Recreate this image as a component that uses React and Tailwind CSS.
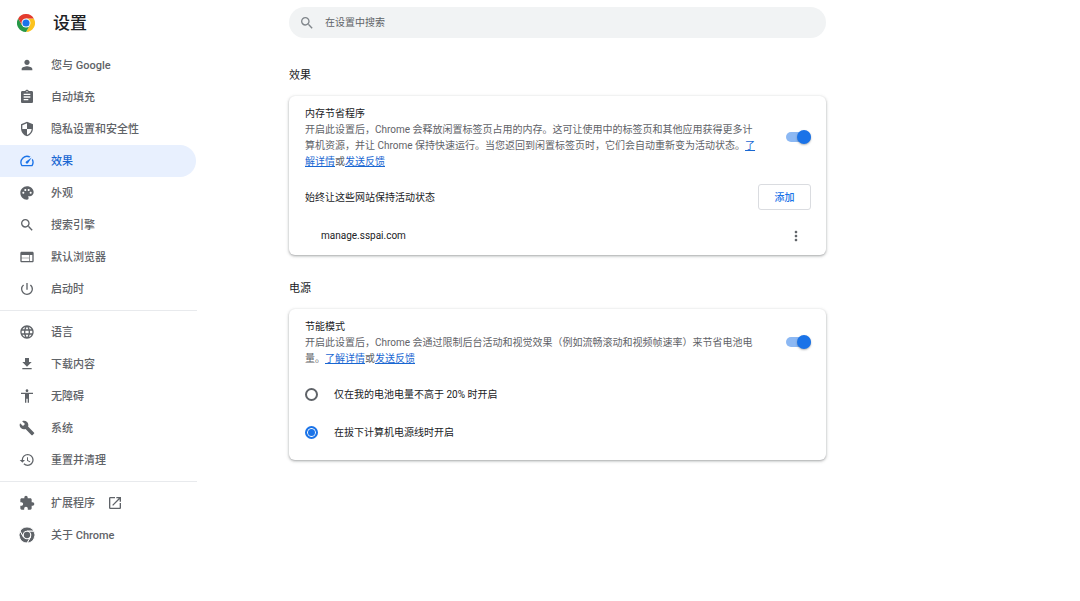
import { useState } from "react";
import {
  MdPerson,
  MdAssignment,
  MdSecurity,
  MdSpeed,
  MdPalette,
  MdSearch,
  MdWeb,
  MdPowerSettingsNew,
  MdLanguage,
  MdFileDownload,
  MdAccessibility,
  MdBuild,
  MdHistory,
  MdExtension,
  MdOpenInNew,
  MdMoreVert,
} from "react-icons/md";

const ChromeLogo = () => (
  <svg viewBox="0 0 48 48" className="size-[18px] shrink-0" aria-hidden="true">
    <path fill="#fcc31e" d="M44.8 12H24L34.4 30 24 48A24 24 0 0 0 44.8 12Z" />
    <path fill="#269847" d="M3.2 12A24 24 0 0 0 24 48L34.4 30H13.6Z" />
    <path fill="#e33b2e" d="M3.2 12A24 24 0 0 1 44.8 12H24L13.6 30Z" />
    <circle cx="24" cy="24" r="12" fill="#fff" />
    <circle cx="24" cy="24" r="9.5" fill="#1a73e8" />
  </svg>
);

// Monochrome version used for the "about" entry
const ChromeGlyph = ({ className }) => (
  <svg viewBox="0 0 48 48" fill="currentColor" className={className} aria-hidden="true">
    <g stroke="#fff" strokeWidth="3">
      <path d="M44.8 12H24L34.4 30 24 48A24 24 0 0 0 44.8 12Z" />
      <path d="M3.2 12A24 24 0 0 0 24 48L34.4 30H13.6Z" />
      <path d="M3.2 12A24 24 0 0 1 44.8 12H24L13.6 30Z" />
    </g>
    <circle cx="24" cy="24" r="13" fill="#fff" />
    <circle cx="24" cy="24" r="9.5" />
  </svg>
);

const menuGroups = [
  [
    { label: "您与 Google", icon: MdPerson },
    { label: "自动填充", icon: MdAssignment },
    { label: "隐私设置和安全性", icon: MdSecurity },
    { label: "效果", icon: MdSpeed },
    { label: "外观", icon: MdPalette },
    { label: "搜索引擎", icon: MdSearch },
    { label: "默认浏览器", icon: MdWeb },
    { label: "启动时", icon: MdPowerSettingsNew },
  ],
  [
    { label: "语言", icon: MdLanguage },
    { label: "下载内容", icon: MdFileDownload },
    { label: "无障碍", icon: MdAccessibility },
    { label: "系统", icon: MdBuild },
    { label: "重置并清理", icon: MdHistory },
  ],
  [
    { label: "扩展程序", icon: MdExtension, external: true },
    { label: "关于 Chrome", icon: ChromeGlyph },
  ],
];

const MenuItem = ({ item, active, onSelect }) => {
  const Icon = item.icon;
  return (
    <li>
      <a
        href="#"
        onClick={(e) => {
          e.preventDefault();
          onSelect(item.label);
        }}
        aria-current={active ? "page" : undefined}
        className={`mr-px flex h-8 items-center gap-4 rounded-r-full pl-[19px] text-[11px] leading-4 font-medium ${
          active ? "bg-[#e8f0fe] text-[#1967d2]" : "text-[#5f6368]"
        }`}
      >
        <Icon className={`size-4 shrink-0 ${active ? "text-[#1a73e8]" : ""}`} />
        <span className="pt-0.5">{item.label}</span>
        {item.external && <MdOpenInNew className="-ml-1 size-4 shrink-0" />}
      </a>
    </li>
  );
};

const Card = ({ title, children }) => (
  <section>
    <h2 className="mb-3 pt-px text-[11px] leading-4 text-[#202124]">{title}</h2>
    <div className="rounded-md bg-white pr-[15px] pl-4 shadow-[0_1px_2px_0_rgba(60,64,67,0.3),0_1px_3px_1px_rgba(60,64,67,0.15)]">
      {children}
    </div>
  </section>
);

const Link = ({ children }) => (
  <a href="#" className="text-[#1967d2] underline">
    {children}
  </a>
);

const ToggleRow = ({ id, title, children }) => (
  <div className="flex items-center justify-between gap-[25px] py-2">
    <div className="min-w-0 flex-1 pt-0.5 leading-4">
      <label htmlFor={id} className="block">
        {title}
      </label>
      <p className="text-[#5f6368]">{children}</p>
    </div>
    <input
      id={id}
      type="checkbox"
      role="switch"
      defaultChecked
      className="relative h-[10px] w-[25px] shrink-0 appearance-none rounded-full bg-[#bdc1c6] before:absolute before:-top-0.5 before:left-0 before:size-[14px] before:rounded-full before:bg-white before:shadow-[0_1px_2px_rgba(60,64,67,0.4)] checked:bg-[#8cb8f3] checked:before:left-[11px] checked:before:bg-[#1a73e8]"
    />
  </div>
);

const RadioRow = ({ value, selected, onChange, children }) => (
  <label className="flex h-[38px] items-center gap-4">
    <input
      type="radio"
      name="battery-saver"
      value={value}
      checked={selected === value}
      onChange={() => onChange(value)}
      className="size-[13px] shrink-0 appearance-none rounded-full border-2 border-[#5f6368] checked:border-[#1a73e8] checked:bg-[#1a73e8] checked:shadow-[inset_0_0_0_1px_#fff]"
    />
    {children}
  </label>
);

const App = () => {
  const [page, setPage] = useState("效果");
  const [saverMode, setSaverMode] = useState("unplugged");

  return (
    <div
      lang="zh-CN"
      className="flex min-h-screen bg-white font-[Roboto,'Noto_Sans_CJK_SC',sans-serif] text-[10px] text-[#202124]"
    >
      {/* Sidebar */}
      <aside className="w-[197px] shrink-0">
        <header className="flex h-[45px] items-center gap-[18px] pl-[17px]">
          <ChromeLogo />
          <h1 className="pt-0.5 text-[17px] font-medium">设置</h1>
        </header>
        <nav className="pt-1">
          {menuGroups.map((group, i) => (
            <ul key={i} className={i > 0 ? "mt-[5px] border-t border-[#e8eaed] pt-[5px]" : ""}>
              {group.map((item) => (
                <MenuItem
                  key={item.label}
                  item={item}
                  active={item.label === page}
                  onSelect={setPage}
                />
              ))}
            </ul>
          ))}
        </nav>
      </aside>

      {/* Content */}
      <main className="min-w-0 flex-1 pt-[7px] pr-4 pl-[92px]">
        <div className="max-w-[537px]">
          <label className="mb-[29px] flex h-[31px] items-center gap-[10px] rounded-full bg-[#f1f3f4] pl-[10px]">
            <MdSearch className="size-4 shrink-0 text-[#80868b]" />
            <input
              type="search"
              aria-label="在设置中搜索"
              placeholder="在设置中搜索"
              className="w-full bg-transparent outline-none placeholder:text-[#5f6368]"
            />
          </label>

          <div className="space-y-[25px]">
            <Card title="效果">
              <ToggleRow id="memory-saver" title="内存节省程序">
                开启此设置后，Chrome 会释放闲置标签页占用的内存。这可让使用中的标签页和其他应用获得更多计算机资源，并让
                Chrome 保持快速运行。当您返回到闲置标签页时，它们会自动重新变为活动状态。
                <Link>了解详情</Link>或<Link>发送反馈</Link>
              </ToggleRow>
              <div className="flex h-[38px] items-center justify-between">
                <span>始终让这些网站保持活动状态</span>
                <button
                  type="button"
                  className="h-[26px] w-[53px] rounded-[3px] border border-[#dadce0] font-medium text-[#1a73e8]"
                >
                  添加
                </button>
              </div>
              <div className="flex h-[39px] items-center justify-between pr-[7px] pl-4">
                <span>manage.sspai.com</span>
                <button type="button" aria-label="更多操作" className="text-[#5f6368]">
                  <MdMoreVert className="size-4" />
                </button>
              </div>
            </Card>

            <Card title="电源">
              <ToggleRow id="energy-saver" title="节能模式">
                开启此设置后，Chrome 会通过限制后台活动和视觉效果（例如流畅滚动和视频帧速率）来节省电池电量。
                <Link>了解详情</Link>或<Link>发送反馈</Link>
              </ToggleRow>
              <div className="pb-[9px]">
                <RadioRow value="low" selected={saverMode} onChange={setSaverMode}>
                  仅在我的电池电量不高于 20% 时开启
                </RadioRow>
                <RadioRow value="unplugged" selected={saverMode} onChange={setSaverMode}>
                  在拔下计算机电源线时开启
                </RadioRow>
              </div>
            </Card>
          </div>
        </div>
      </main>
    </div>
  );
};

export default App;
